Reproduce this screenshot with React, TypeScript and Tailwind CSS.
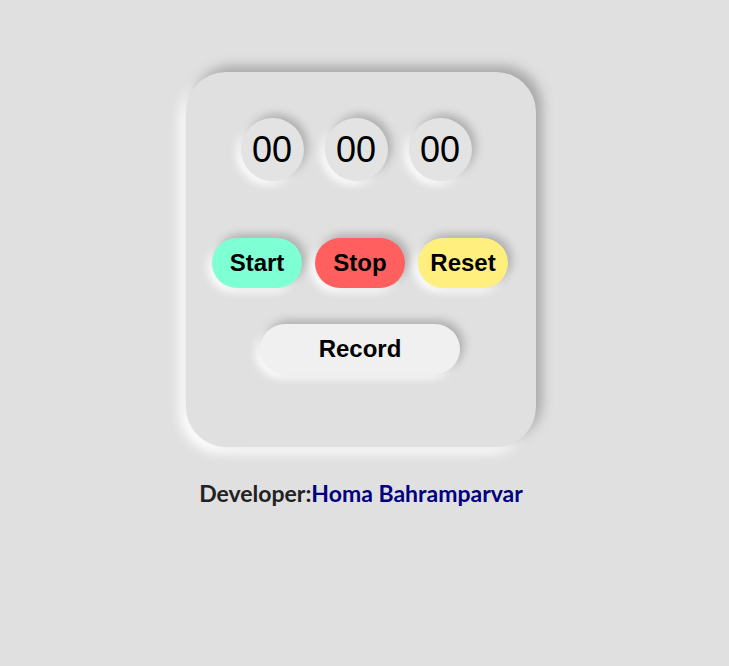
export default function App() {
  const units = ["00", "00", "00"];
  return (
    <div className="min-h-screen bg-[#e0e0e0] pt-[72px] pr-[7px] flex flex-col items-center">
      <div className="w-[350px] h-[375px] rounded-[40px] bg-[#e0e0e0] shadow-[6px_-6px_12px_#a8a8a8,-6px_6px_12px_#ffffff] flex flex-col items-center pt-[46px]">
        <div className="flex gap-[21px] mr-[10px]">
          {units.map((u, i) => (
            <div
              key={i}
              className="w-[63px] h-[63px] rounded-full bg-[#e3e3e3] shadow-[4px_-4px_8px_#b0b0b0,-4px_4px_8px_#ffffff] flex items-center justify-center text-[36px] text-black font-['Liberation_Sans',Arial,sans-serif]"
            >
              {u}
            </div>
          ))}
        </div>
        <div className="flex gap-[13px] mt-[57px] mr-[2px] font-['Liberation_Sans',Arial,sans-serif] font-bold text-[24px] text-black">
          <button className="w-[90px] h-[50px] rounded-full bg-[#7fffd4] shadow-[4px_-4px_8px_#b0b0b0,-4px_4px_8px_#ffffff]">Start</button>
          <button className="w-[90px] h-[50px] rounded-full bg-[#ff5f5f] shadow-[4px_-4px_8px_#b0b0b0,-4px_4px_8px_#ffffff]">Stop</button>
          <button className="w-[90px] h-[50px] rounded-full bg-[#ffef7f] shadow-[4px_-4px_8px_#b0b0b0,-4px_4px_8px_#ffffff]">Reset</button>
        </div>
        <button className="mt-[36px] mr-[2px] w-[200px] h-[50px] rounded-full bg-[#f0f0f0] shadow-[4px_-4px_8px_#b0b0b0,-4px_4px_8px_#ffffff] font-['Liberation_Sans',Arial,sans-serif] font-bold text-[24px] text-black">
          Record
        </button>
      </div>
      <p className="mt-[31px] text-[23px] leading-[30px] font-bold text-[#222] font-['Lato','Noto_Sans',sans-serif]">
        Developer:<span className="text-[#000080]">Homa Bahramparvar</span>
      </p>
    </div>
  );
}
